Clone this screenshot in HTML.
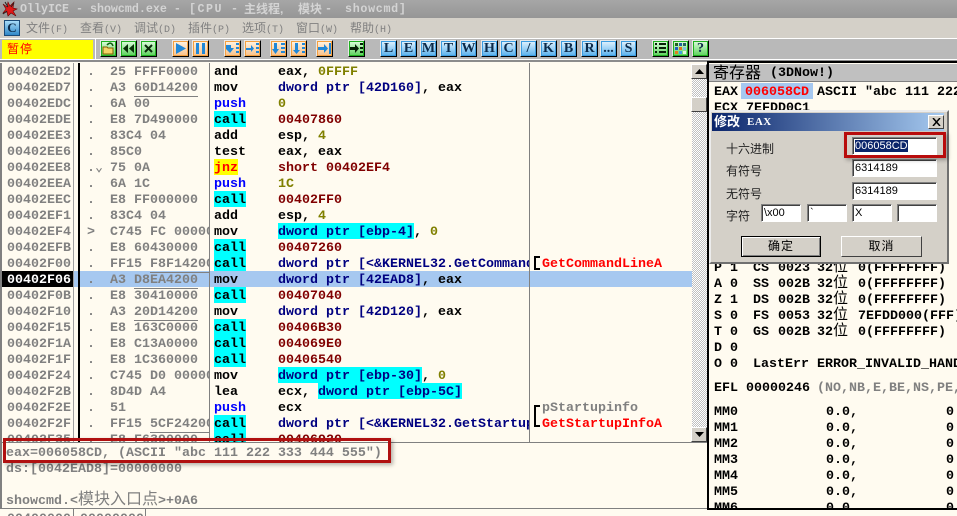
<!DOCTYPE html>
<html><head><meta charset="utf-8"><style>
html,body{margin:0;padding:0}
body{width:957px;height:516px;overflow:hidden;position:relative;background:#fffbf0;font:bold 13.33px/16px "Liberation Mono","Noto Sans CJK SC",monospace;color:#000}
div{position:absolute;white-space:pre}
.z{font-family:"Liberation Sans","Noto Sans CJK SC",sans-serif;font-weight:400}
.r{left:0;width:692px;height:16px}
.r>span{position:absolute;top:0;white-space:pre;overflow:hidden;height:18px;line-height:20px}
.A{left:7px;color:#808080}.D{left:87px;color:#808080}.H{left:110px;width:99px;color:#808080}
.M{left:214px}.O{left:278px;width:251px}
.c{background:linear-gradient(#0ff,#0ff) 0 0/100% 16px no-repeat}
span.c{display:inline-block;height:18px;line-height:20px}
.r>span.M.c{display:block}
.j{background:linear-gradient(#ff0,#ff0) 0 0/100% 16px no-repeat;color:#f00}
.n{color:#000080}.l{color:#808000}.w{color:#800000}.u{border-bottom:1px solid #808080}
.t{top:1px;height:16px;color:#d4d4d4;font-size:11.67px;line-height:17px}
.mn{top:20px;font-size:12px;color:#808080;line-height:16px}
.mn span{font:10px "Liberation Mono",monospace}
.b{width:15px;height:15px;top:40px;border:1px solid;border-color:#e8e8e8 #000 #000 #e8e8e8;text-align:center;font:bold 14px/15px "Liberation Serif",serif;color:#0b2a4a}
.bl{background:linear-gradient(#e4f4ff,#58b0ec);box-shadow:inset 0 0 0 1px #3c9ce0}
.gr{background:linear-gradient(#e0ffe0,#58d058);box-shadow:inset 0 0 0 1px #20b020}
.or{background:linear-gradient(#fff4e4,#f8c088);box-shadow:inset 0 0 0 1px #f4a040}
.b svg{position:absolute;left:0;top:0}
.ip{background:#fff;border:1px solid;border-color:#808080 #fff #fff #808080;box-shadow:inset 1px 1px 0 #404040;font:11px/16px "Liberation Sans",sans-serif;color:#000;padding-left:2px;box-sizing:border-box}
.lb{font:12px/16px "Liberation Sans","Noto Sans CJK SC",sans-serif;color:#222}
.chk{background-color:#fff;background-image:conic-gradient(#c0c0c0 25%,#fff 0 50%,#c0c0c0 0 75%,#fff 0);background-size:2px 2px}
.sb{background:#d4d0c8;border:1px solid;border-color:#fff #404040 #404040 #fff;box-sizing:border-box}
.rg{left:0;width:248px;height:16px}
.rg>span{position:absolute;top:0;white-space:pre;line-height:20px;height:16px}
.rg>span.h{overflow:hidden}
.w2{font-size:15px;line-height:16px}
</style></head><body>

<div style="left:0;top:0;width:957px;height:18px;background:linear-gradient(#a6a6a6,#969696)"></div>
<svg style="position:absolute;left:2px;top:1px" width="16" height="16" viewBox="0 0 16 16"><path d="M1 3l4 3 1-5 2 4 4-4-1 6 4 1-4 2 3 5-5-3-3 3-1-4-4 1 3-4z" fill="#e01818" stroke="#600" stroke-width=".6"/><path d="M3 1l3 5M12 2l-3 4M1 13l4-3" stroke="#222" stroke-width="1"/></svg>
<div class="t" style="left:20px">OllyICE - showcmd.exe -</div>
<div class="t" style="left:189px;letter-spacing:1.500px">[CPU</div>
<div class="t" style="left:231px">-</div>
<div class="t z" style="left:244px;font-size:12px;font-weight:700">主线程,</div>
<div class="t z" style="left:298px;font-size:12px;font-weight:700">模块</div>
<div class="t" style="left:325px">-</div>
<div class="t" style="left:345px;letter-spacing:.7px">showcmd]</div>

<div style="left:0;top:18px;width:957px;height:20px;background:#d4d0c8"></div>
<div style="left:4px;top:20px;width:14px;height:14px;background:linear-gradient(#a8dcf8,#3088c8);border:1px solid #1a4a78;text-align:center;font:bold 13px/14px 'Liberation Serif',serif;color:#0b2a4a">C</div>
<div class="z mn" style="left:26px">文件<span>(F)</span></div>
<div class="z mn" style="left:80px">查看<span>(V)</span></div>
<div class="z mn" style="left:134px">调试<span>(D)</span></div>
<div class="z mn" style="left:188px">插件<span>(P)</span></div>
<div class="z mn" style="left:242px">选项<span>(T)</span></div>
<div class="z mn" style="left:296px">窗口<span>(W)</span></div>
<div class="z mn" style="left:350px">帮助<span>(H)</span></div>

<div style="left:0;top:38px;width:957px;height:21px;background:#b9b9b9;border-top:1px solid #fff;box-sizing:border-box"></div>
<div style="left:0;top:59px;width:957px;height:1px;background:#fff"></div>
<div style="left:0;top:60px;width:957px;height:2px;background:#8c8c8c"></div>
<div class="z" style="left:2px;top:40px;width:91px;height:19px;background:#ff0;color:#f00;font-size:12px;line-height:18px;padding-left:5px;box-sizing:border-box;letter-spacing:1px">暂停</div>
<div style="left:95px;top:39px;width:1px;height:20px;background:#fff"></div>

<div class="b gr" style="left:100px"><svg width="15" height="15"><path d="M2 6h4l1 1h5v6H2z" fill="#f4d468" stroke="#806000"/><path d="M6 4c3-3 5-2 6 1" fill="none" stroke="#106010" stroke-width="1.500"/></svg></div>
<div class="b gr" style="left:120px"><svg width="15" height="15"><path d="M7 3v9L2 7.500zM13 3v9L8 7.500z" fill="#083008"/></svg></div>
<div class="b gr" style="left:140px"><svg width="15" height="15"><path d="M4 4l7 7M11 4l-7 7" stroke="#082808" stroke-width="2"/></svg></div>
<div class="b or" style="left:172px"><svg width="15" height="15"><path d="M3 2l10 5.500L3 13z" fill="#2088d8"/></svg></div>
<div class="b or" style="left:192px"><svg width="15" height="15"><path d="M3 2h3v11H3zM9 2h3v11H9z" fill="#2088d8"/></svg></div>
<div class="b or" style="left:224px"><svg width="15" height="15"><path d="M1 4h5v3h3l-4 5-4-4zM11 2h3v2h-3zM11 6h3v2h-3zM11 10h3v2h-3z" fill="#2088d8"/></svg></div>
<div class="b or" style="left:244px"><svg width="15" height="15"><path d="M1 7h5V4l3 3.500-3 3.500V9H1zM11 2h3v2h-3zM11 6h3v2h-3zM11 10h3v2h-3z" fill="#2088d8"/></svg></div>
<div class="b or" style="left:270px"><svg width="15" height="15"><path d="M3 2h3v6h2l-3.500 5L1 8h2zM10 2h4v2h-4zM10 6h4v2h-4zM10 10h4v2h-4z" fill="#2088d8"/></svg></div>
<div class="b or" style="left:290px"><svg width="15" height="15"><path d="M4 2h3v7h2l-3.500 4L2 9h2zM11 2h3v2h-3zM11 6h3v2h-3zM11 10h3v2h-3z" fill="#2088d8"/></svg></div>
<div class="b or" style="left:316px"><svg width="15" height="15"><path d="M1 6h6V3l4 4.500-4 4.500V9H1z" fill="#2088d8"/><path d="M13 2v11" stroke="#2088d8" stroke-width="2"/></svg></div>
<div class="b gr" style="left:348px"><svg width="15" height="15"><path d="M1 6h5V3l4 4.500-4 4.500V9H1zM11 2h3v2h-3zM11 6h3v2h-3zM11 10h3v2h-3z" fill="#062006"/></svg></div>
<div class="b bl" style="left:380px">L</div>
<div class="b bl" style="left:400px">E</div>
<div class="b bl" style="left:420px">M</div>
<div class="b bl" style="left:440px">T</div>
<div class="b bl" style="left:460px">W</div>
<div class="b bl" style="left:481px">H</div>
<div class="b bl" style="left:500px">C</div>
<div class="b bl" style="left:520px">/</div>
<div class="b bl" style="left:540px">K</div>
<div class="b bl" style="left:560px">B</div>
<div class="b bl" style="left:581px">R</div>
<div class="b bl" style="left:600px">...</div>
<div class="b bl" style="left:620px">S</div>
<div class="b gr" style="left:652px"><svg width="15" height="15"><path d="M2 2h2v2H2zM6 2h7v2H6zM2 6h2v2H2zM6 6h7v2H6zM2 10h2v2H2zM6 10h7v2H6z" fill="#062006"/></svg></div>
<div class="b gr" style="left:672px"><svg width="15" height="15"><path d="M2 2h3v3H2z" fill="#206020"/><path d="M6 2h3v3H6z" fill="#2060a0"/><path d="M10 2h3v3h-3z" fill="#206060"/><path d="M2 6h3v3H2z" fill="#2060c0"/><path d="M6 6h3v3H6z" fill="#e07020"/><path d="M10 6h3v3h-3z" fill="#80c0e0"/><path d="M2 10h3v3H2z" fill="#e08020"/><path d="M6 10h3v3H6z" fill="#40a0e0"/><path d="M10 10h3v3h-3z" fill="#e0f8e0"/></svg></div>
<div class="b gr" style="left:692px">?</div>

<div style="left:0;top:62px;width:707px;height:380px;overflow:hidden">
<div style="left:0;top:-62px;width:707px;height:442px">
<div style="left:73px;top:271px;width:619px;height:16px;background:#a6c8f0"></div>
<div style="left:2px;top:271px;width:71px;height:16px;background:#000"></div>
<div class="r" style="top:63px"><span class="A">00402ED2</span><span class="D">.</span><span class="H">25 FFFF0000</span><span class="M">and</span><span class="O">eax, <span class="l">0FFFF</span></span></div>
<div class="r" style="top:79px"><span class="A">00402ED7</span><span class="D">.</span><span class="H">A3 <span class="u">60D14200</span></span><span class="M">mov</span><span class="O"><span class="n">dword ptr [42D160]</span>, eax</span></div>
<div class="r" style="top:95px"><span class="A">00402EDC</span><span class="D">.</span><span class="H">6A 00</span><span class="M" style="color:#00f">push</span><span class="O l">0</span></div>
<div class="r" style="top:111px"><span class="A">00402EDE</span><span class="D">.</span><span class="H">E8 7D490000</span><span class="M c">call</span><span class="O w">00407860</span></div>
<div class="r" style="top:127px"><span class="A">00402EE3</span><span class="D">.</span><span class="H">83C4 04</span><span class="M">add</span><span class="O">esp, <span class="l">4</span></span></div>
<div class="r" style="top:143px"><span class="A">00402EE6</span><span class="D">.</span><span class="H">85C0</span><span class="M">test</span><span class="O">eax, eax</span></div>
<div class="r" style="top:159px"><span class="A">00402EE8</span><span class="D">.&#8964;</span><span class="H">75 0A</span><span class="M j">jnz</span><span class="O w">short 00402EF4</span></div>
<div class="r" style="top:175px"><span class="A">00402EEA</span><span class="D">.</span><span class="H">6A 1C</span><span class="M" style="color:#00f">push</span><span class="O l">1C</span></div>
<div class="r" style="top:191px"><span class="A">00402EEC</span><span class="D">.</span><span class="H">E8 FF000000</span><span class="M c">call</span><span class="O w">00402FF0</span></div>
<div class="r" style="top:207px"><span class="A">00402EF1</span><span class="D">.</span><span class="H">83C4 04</span><span class="M">add</span><span class="O">esp, <span class="l">4</span></span></div>
<div class="r" style="top:223px"><span class="A">00402EF4</span><span class="D">&gt;</span><span class="H">C745 FC 00000000</span><span class="M">mov</span><span class="O"><span class="n c">dword ptr [ebp-4]</span>, <span class="l">0</span></span></div>
<div class="r" style="top:239px"><span class="A">00402EFB</span><span class="D">.</span><span class="H">E8 60430000</span><span class="M c">call</span><span class="O w">00407260</span></div>
<div class="r" style="top:255px"><span class="A">00402F00</span><span class="D">.</span><span class="H">FF15 <span class="u">F8F14200</span></span><span class="M c">call</span><span class="O n">dword ptr [&lt;&amp;KERNEL32.GetCommandLineA</span></div>
<div class="r" style="top:271px"><span class="A" style="color:#fff">00402F06</span><span class="D">.</span><span class="H">A3 <span class="u">D8EA4200</span></span><span class="M">mov</span><span class="O"><span class="n">dword ptr [42EAD8]</span>, eax</span></div>
<div class="r" style="top:287px"><span class="A">00402F0B</span><span class="D">.</span><span class="H">E8 30410000</span><span class="M c">call</span><span class="O w">00407040</span></div>
<div class="r" style="top:303px"><span class="A">00402F10</span><span class="D">.</span><span class="H">A3 <span class="u">20D14200</span></span><span class="M">mov</span><span class="O"><span class="n">dword ptr [42D120]</span>, eax</span></div>
<div class="r" style="top:319px"><span class="A">00402F15</span><span class="D">.</span><span class="H">E8 163C0000</span><span class="M c">call</span><span class="O w">00406B30</span></div>
<div class="r" style="top:335px"><span class="A">00402F1A</span><span class="D">.</span><span class="H">E8 C13A0000</span><span class="M c">call</span><span class="O w">004069E0</span></div>
<div class="r" style="top:351px"><span class="A">00402F1F</span><span class="D">.</span><span class="H">E8 1C360000</span><span class="M c">call</span><span class="O w">00406540</span></div>
<div class="r" style="top:367px"><span class="A">00402F24</span><span class="D">.</span><span class="H">C745 D0 00000000</span><span class="M">mov</span><span class="O"><span class="n c">dword ptr [ebp-30]</span>, <span class="l">0</span></span></div>
<div class="r" style="top:383px"><span class="A">00402F2B</span><span class="D">.</span><span class="H">8D4D A4</span><span class="M">lea</span><span class="O">ecx, <span class="n c">dword ptr [ebp-5C]</span></span></div>
<div class="r" style="top:399px"><span class="A">00402F2E</span><span class="D">.</span><span class="H">51</span><span class="M" style="color:#00f">push</span><span class="O">ecx</span></div>
<div class="r" style="top:415px"><span class="A">00402F2F</span><span class="D">.</span><span class="H">FF15 <span class="u">5CF24200</span></span><span class="M c">call</span><span class="O n">dword ptr [&lt;&amp;KERNEL32.GetStartupInfoA</span></div>
<div class="r" style="top:431px"><span class="A">00402F35</span><span class="D">.</span><span class="H">E8 F6390000</span><span class="M c">call</span><span class="O w">00406920</span></div>
<div style="left:0;top:63px;width:2px;height:379px;background:#808080"></div>
<div style="left:73px;top:63px;width:1px;height:379px;background:#a0a0a0"></div>
<div style="left:78px;top:63px;width:2px;height:379px;background:#000"></div>
<div style="left:209px;top:63px;width:1px;height:379px;background:#808080"></div>
<div style="left:529px;top:63px;width:1px;height:379px;background:#808080"></div>
<div style="left:534px;top:256px;width:6px;height:14px;border:2px solid #000;border-right:0;box-sizing:border-box"></div>
<div style="left:534px;top:405px;width:6px;height:22px;border:2px solid #000;border-right:0;box-sizing:border-box"></div>
<div style="left:542px;top:257px;color:#f00">GetCommandLineA</div>
<div style="left:542px;top:401px;color:#808080">pStartupinfo</div>
<div style="left:542px;top:417px;color:#f00">GetStartupInfoA</div>
</div></div>

<div class="chk" style="left:692px;top:64px;width:15px;height:378px"></div>
<div class="sb" style="left:691px;top:64px;width:16px;height:15px"><svg style="position:absolute;left:3px;top:4px" width="9" height="5"><path d="M4.500 0L9 5H0z"/></svg></div>
<div class="sb" style="left:691px;top:97px;width:16px;height:15px"></div>
<div class="sb" style="left:691px;top:427px;width:16px;height:15px"><svg style="position:absolute;left:3px;top:4px" width="9" height="5"><path d="M0 0h9L4.500 5z"/></svg></div>
<div style="left:0;top:442px;width:707px;height:1px;background:#808080"></div>

<div style="left:0;top:443px;width:2px;height:65px;background:#808080"></div>
<div style="left:6px;top:446px;color:#808080">eax=006058CD, (ASCII "abc 111 222 333 444 555")</div>
<div style="left:6px;top:462px;color:#808080">ds:[0042EAD8]=00000000</div>
<div style="left:6px;top:492px;color:#808080;height:16px">showcmd.&lt;<span class="z" style="font-size:16px;line-height:16px">模块入口点</span>&gt;+0A6</div>
<div style="left:0;top:508px;width:707px;height:1px;background:#808080"></div>
<div style="left:0;top:509px;width:707px;height:7px;overflow:hidden"><div style="left:7px;top:3px;height:4px;overflow:hidden;color:#808080">00400000</div><div style="left:80px;top:3px;height:4px;overflow:hidden;color:#808080">00000000</div><div style="left:73px;top:0;width:1px;height:7px;background:#808080"></div><div style="left:145px;top:0;width:1px;height:7px;background:#808080"></div></div>

<div style="left:707px;top:61px;width:250px;height:449px;background:#fffbf0;border-left:2px solid #000;border-top:2px solid #000;border-bottom:2px solid #000;box-sizing:border-box;overflow:hidden">
<div style="left:0;top:1px;width:248px;height:18px;background:#c0c0c0;border-bottom:1px solid #808080;box-sizing:border-box"></div>
<div class="z" style="left:4px;top:3px;font-size:16px;line-height:16px;height:16px">寄存器</div>
<div style="left:61px;top:3px">(3DNow!)</div>
<div class="rg" style="top:20px"><span style="left:5px">EAX</span><span style="left:32px;width:72px;background:#a6c8f0;color:#f00;text-align:center">006058CD</span><span style="left:108px;width:140px;overflow:hidden">ASCII "abc 111 222</span></div>
<div class="rg" style="top:36px"><span style="left:5px">ECX</span><span style="left:37px">7EFDD0C1</span></div>
<div class="rg" style="top:196px"><span style="left:5px">P</span><span style="left:21px">1</span><span style="left:44px">CS</span><span style="left:69px">0023</span><span style="left:108px">32<span class="z w2">位</span></span><span style="left:149px">0(FFFFFFFF)</span></div>
<div class="rg" style="top:212px"><span style="left:5px">A</span><span style="left:21px">0</span><span style="left:44px">SS</span><span style="left:69px">002B</span><span style="left:108px">32<span class="z w2">位</span></span><span style="left:149px">0(FFFFFFFF)</span></div>
<div class="rg" style="top:228px"><span style="left:5px">Z</span><span style="left:21px">1</span><span style="left:44px">DS</span><span style="left:69px">002B</span><span style="left:108px">32<span class="z w2">位</span></span><span style="left:149px">0(FFFFFFFF)</span></div>
<div class="rg" style="top:244px"><span style="left:5px">S</span><span style="left:21px">0</span><span style="left:44px">FS</span><span style="left:69px">0053</span><span style="left:108px">32<span class="z w2">位</span></span><span style="left:149px;width:99px;overflow:hidden">7EFDD000(FFF)</span></div>
<div class="rg" style="top:260px"><span style="left:5px">T</span><span style="left:21px">0</span><span style="left:44px">GS</span><span style="left:69px">002B</span><span style="left:108px">32<span class="z w2">位</span></span><span style="left:149px">0(FFFFFFFF)</span></div>
<div class="rg" style="top:276px"><span style="left:5px">D</span><span style="left:21px">0</span></div>
<div class="rg" style="top:292px"><span style="left:5px">O</span><span style="left:21px">0</span><span style="left:44px">LastErr</span><span style="left:108px;width:140px;overflow:hidden;height:18px">ERROR_INVALID_HAND</span></div>
<div class="rg" style="top:316px"><span style="left:5px">EFL</span><span style="left:37px">00000246</span><span style="left:108px;width:140px;overflow:hidden;height:18px;color:#808080">(NO,NB,E,BE,NS,PE,</span></div>
<div class="rg" style="top:340px"><span style="left:5px">MM0</span><span style="left:117px">0.0,</span><span style="left:237px;width:11px;overflow:hidden">0.</span></div>
<div class="rg" style="top:356px"><span style="left:5px">MM1</span><span style="left:117px">0.0,</span><span style="left:237px;width:11px;overflow:hidden">0.</span></div>
<div class="rg" style="top:372px"><span style="left:5px">MM2</span><span style="left:117px">0.0,</span><span style="left:237px;width:11px;overflow:hidden">0.</span></div>
<div class="rg" style="top:388px"><span style="left:5px">MM3</span><span style="left:117px">0.0,</span><span style="left:237px;width:11px;overflow:hidden">0.</span></div>
<div class="rg" style="top:404px"><span style="left:5px">MM4</span><span style="left:117px">0.0,</span><span style="left:237px;width:11px;overflow:hidden">0.</span></div>
<div class="rg" style="top:420px"><span style="left:5px">MM5</span><span style="left:117px">0.0,</span><span style="left:237px;width:11px;overflow:hidden">0.</span></div>
<div class="rg" style="top:436px;height:9px;overflow:hidden"><span style="left:5px">MM6</span><span style="left:117px">0.0,</span><span style="left:237px;width:11px;overflow:hidden">0.</span></div>
</div>

<div style="left:709px;top:110px;width:240px;height:154px;background:#d4d0c8;border:2px solid;border-color:#ececec #707070 #707070 #ececec;box-sizing:border-box"></div>
<div style="left:712px;top:113px;width:232px;height:18px;background:linear-gradient(90deg,#0a246a,#a6caf0)"></div>
<div class="z" style="left:714px;top:113px;height:18px;color:#fff;font-size:13px;font-weight:700;line-height:18px">修改</div>
<div style="left:747px;top:113px;height:18px;color:#fff;font:bold 11px/18px 'Liberation Serif',serif;letter-spacing:.5px">EAX</div>
<div style="left:928px;top:115px;width:16px;height:14px;background:#d4d0c8;border:1px solid;border-color:#fff #404040 #404040 #fff;box-sizing:border-box"><svg style="position:absolute;left:3px;top:2px" width="9" height="8"><path d="M1 0l7 8M8 0L1 8" stroke="#000" stroke-width="1.500"/></svg></div>
<div class="lb" style="left:726px;top:141px">十六进制</div>
<div class="lb" style="left:726px;top:163px">有符号</div>
<div class="lb" style="left:726px;top:186px">无符号</div>
<div class="lb" style="left:726px;top:208px">字符</div>
<div class="ip" style="left:852px;top:137px;width:85px;height:18px;padding-top:0"><span style="background:#0a246a;color:#fff">006058CD</span></div>
<div class="ip" style="left:852px;top:159px;width:85px;height:18px">6314189</div>
<div class="ip" style="left:852px;top:182px;width:85px;height:18px">6314189</div>
<div class="ip" style="left:761px;top:204px;width:40px;height:18px">\x00</div>
<div class="ip" style="left:807px;top:204px;width:40px;height:18px">`</div>
<div class="ip" style="left:852px;top:204px;width:40px;height:18px">X</div>
<div class="ip" style="left:897px;top:204px;width:40px;height:18px"></div>
<div class="z" style="left:741px;top:236px;width:80px;height:21px;background:#d4d0c8;border:1px solid #000;box-shadow:inset 1px 1px 0 #fff,inset -1px -1px 0 #808080;text-align:center;font-size:12px;line-height:19px;box-sizing:border-box;letter-spacing:1px">确定</div>
<div class="z" style="left:841px;top:236px;width:81px;height:21px;background:#d4d0c8;border:1px solid;border-color:#fff #404040 #404040 #fff;text-align:center;font-size:12px;line-height:19px;box-sizing:border-box;letter-spacing:1px">取消</div>

<div style="left:844px;top:132px;width:102px;height:26px;border:3px solid #b80c0c;box-sizing:border-box;box-shadow:2px 2px 4px rgba(0,0,0,.3)"></div>
<div style="left:3px;top:438px;width:388px;height:25px;border:3px solid #b01010;box-sizing:border-box;box-shadow:2px 2px 4px rgba(0,0,0,.3)"></div>
</body></html>
